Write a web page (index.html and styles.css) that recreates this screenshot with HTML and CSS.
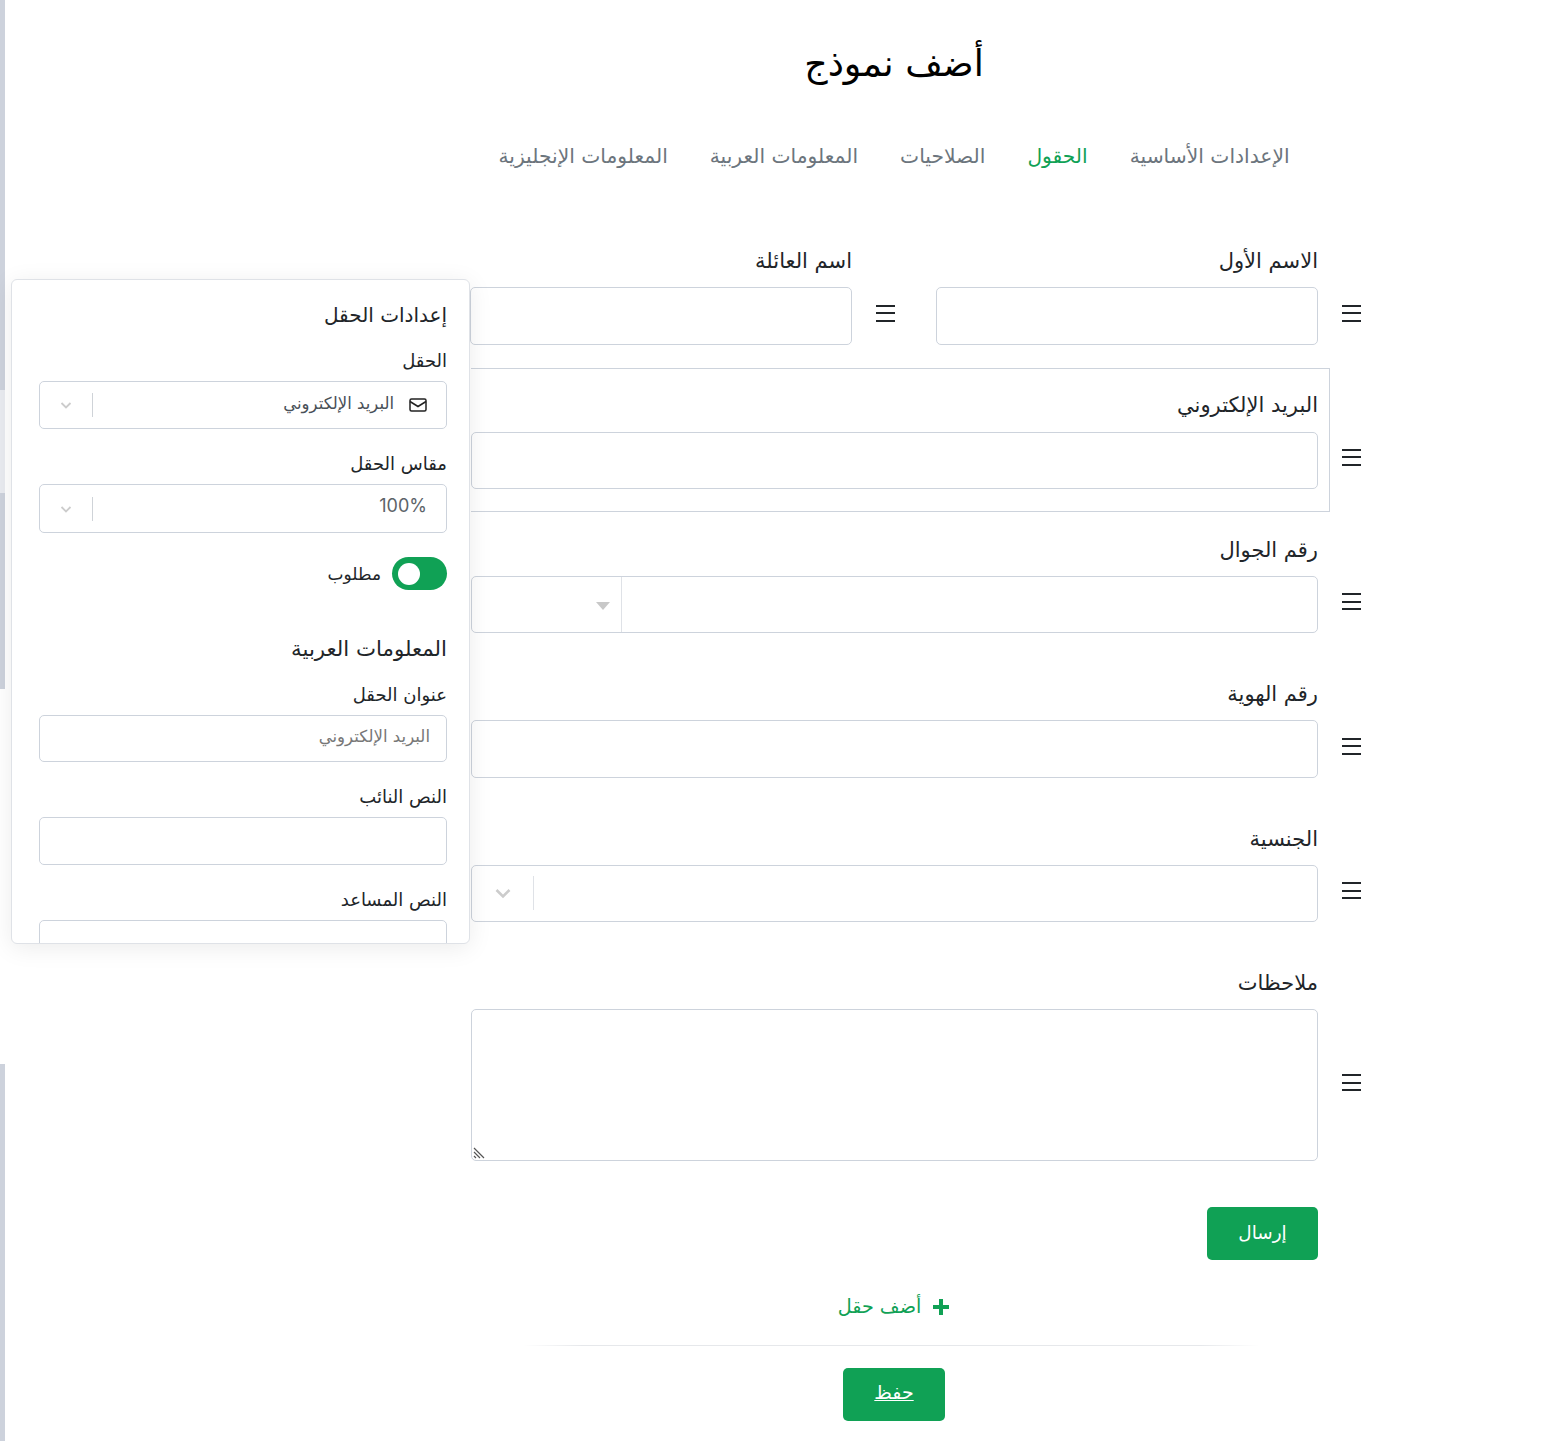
FILE: index.html
```html
<!DOCTYPE html>
<html lang="ar" dir="rtl">
<head>
    <meta charset="UTF-8">
    <title>أضف نموذج</title>
    <link rel="stylesheet" href="styles.css">
</head>
<body>
    <!-- Left edge of the sidebar, mostly cut off -->
    <div class="edge">
        <div class="edge-a"></div>
        <div class="edge-b"></div>
        <div class="edge-c"></div>
        <div class="edge-d"></div>
        <div class="edge-e"></div>
    </div>

    <main class="page">
        <h1 class="title">أضف نموذج</h1>

        <nav class="tabs">
            <a>الإعدادات الأساسية</a>
            <a class="active">الحقول</a>
            <a>الصلاحيات</a>
            <a>المعلومات العربية</a>
            <a>المعلومات الإنجليزية</a>
        </nav>

        <div class="rows">
            <div class="row row-names">
                <div class="cell">
                    <span class="handle"><i></i><i></i><i></i></span>
                    <div class="field">
                        <label>الاسم الأول</label>
                        <div class="box"></div>
                    </div>
                </div>
                <div class="cell">
                    <span class="handle"><i></i><i></i><i></i></span>
                    <div class="field">
                        <label>اسم العائلة</label>
                        <div class="box"></div>
                    </div>
                </div>
            </div>

            <div class="row">
                <span class="handle"><i></i><i></i><i></i></span>
                <div class="field selected">
                    <label>البريد الإلكتروني</label>
                    <div class="box"></div>
                </div>
            </div>

            <div class="row">
                <span class="handle"><i></i><i></i><i></i></span>
                <div class="field">
                    <label>رقم الجوال</label>
                    <div class="box box-phone">
                        <div class="phone-code"><span class="caret"></span></div>
                    </div>
                </div>
            </div>

            <div class="row">
                <span class="handle"><i></i><i></i><i></i></span>
                <div class="field">
                    <label>رقم الهوية</label>
                    <div class="box"></div>
                </div>
            </div>

            <div class="row">
                <span class="handle"><i></i><i></i><i></i></span>
                <div class="field">
                    <label>الجنسية</label>
                    <div class="box box-select">
                        <span class="sep"></span>
                        <svg class="chevron" width="20" height="20" viewBox="0 0 20 20"><path d="M3.5 7 10 13.5 16.5 7" fill="none" stroke="#ccc" stroke-width="2.6"/></svg>
                    </div>
                </div>
            </div>

            <div class="row row-notes">
                <span class="handle handle-notes"><i></i><i></i><i></i></span>
                <div class="field">
                    <label>ملاحظات</label>
                    <div class="box box-area">
                        <svg class="grip" width="12" height="12" viewBox="0 0 12 12"><path d="M1 1 11 11M1 5l6 6M1 9l2 2" stroke="#555" stroke-width="1.2" fill="none"/></svg>
                    </div>
                </div>
            </div>

            <div class="send-row">
                <button class="btn btn-send">إرسال</button>
            </div>
        </div>

        <div class="add-field">
            <svg width="18" height="18" viewBox="0 0 18 18"><path d="M9 1v16M1 9h16" stroke="#10a155" stroke-width="4"/></svg>
            <span>أضف حقل</span>
        </div>

        <hr class="divider">

        <div class="save-row">
            <button class="btn btn-save">حفظ</button>
        </div>
    </main>

    <!-- Floating field settings panel -->
    <aside class="panel">
        <h2>إعدادات الحقل</h2>

        <label class="panel-label">الحقل</label>
        <div class="pick pick-first">
            <svg class="mail" width="18" height="14" viewBox="0 0 18 14"><rect x="1" y="1" width="16" height="12" rx="1.5" fill="none" stroke="#222" stroke-width="1.5"/><path d="M1 3.5 9 8.5l8-5" fill="none" stroke="#222" stroke-width="1.5"/></svg>
            <span class="pick-text">البريد الإلكتروني</span>
            <span class="pick-sep"></span>
            <svg class="pick-chev" width="14" height="14" viewBox="0 0 14 14"><path d="M2.5 5 7 9.5 11.5 5" fill="none" stroke="#ccc" stroke-width="1.8"/></svg>
        </div>

        <label class="panel-label">مقاس الحقل</label>
        <div class="pick">
            <span class="pick-value">100%</span>
            <span class="pick-sep"></span>
            <svg class="pick-chev" width="14" height="14" viewBox="0 0 14 14"><path d="M2.5 5 7 9.5 11.5 5" fill="none" stroke="#ccc" stroke-width="1.8"/></svg>
        </div>

        <div class="toggle-row">
            <span class="toggle"><span class="knob"></span></span>
            <span>مطلوب</span>
        </div>

        <h2 class="panel-sub">المعلومات العربية</h2>

        <label class="panel-label">عنوان الحقل</label>
        <div class="plain plain-hint">البريد الإلكتروني</div>

        <label class="panel-label">النص النائب</label>
        <div class="plain"></div>

        <label class="panel-label">النص المساعد</label>
        <div class="plain"></div>
    </aside>
</body>
</html>
```

FILE: styles.css
```css
* {
    box-sizing: border-box;
}

html, body {
    margin: 0;
    height: 1441px;
    overflow: hidden;
}

body {
    background: #fff;
    color: #212529;
    font-family: "DejaVu Sans", sans-serif;
    font-size: 16px;
    position: relative;
}

/* Sidebar edge */
.edge {
    position: absolute;
    left: 0;
    top: 0;
    width: 5px;
    height: 1441px;
    display: flex;
    flex-direction: column;
}

.edge-a { height: 390px; background: #cdd2dc; }
.edge-b { height: 103px; background: #e9ebf0; }
.edge-c { height: 196px; background: #cdd2dc; }
.edge-d { height: 375px; background: #fff; }
.edge-e { flex: 1; background: #cdd2dc; }

/* Main column */
.page {
    width: 1557px;
    padding: 0 196px 0 0;
}

.title {
    margin: 0 44px 0 471px;
    padding-top: 37px;
    height: 123px;
    text-align: center;
    font-size: 36.3px;
    font-weight: 400;
    line-height: 54px;
    color: #000;
}

.tabs {
    display: flex;
    justify-content: center;
    gap: 42px;
    height: 124px;
    padding-top: 18px;
    margin: 0 44px 0 471px;
    font-size: 20.26px;
    line-height: 30px;
    color: #6c757d;
}

.tabs .active {
    color: #10a155;
}

.rows {
    display: flex;
    flex-direction: column;
    margin-left: 471px;
}

.row {
    display: flex;
    align-items: flex-start;
    gap: 24px;
    height: 144.4px;
    flex: none;
}

.row-names {
    gap: 41px;
    margin-left: -1px;
}

.row-notes {
    height: 238px;
}

.cell {
    display: flex;
    align-items: flex-start;
    gap: 24px;
    width: 425px;
    flex: none;
}

.field {
    flex: 1;
    min-width: 0;
}

.field label {
    display: block;
    font-size: 21px;
    line-height: 28px;
    margin-bottom: 12px;
}

.selected {
    height: 144px;
    border: 1px solid #cdd3dc;
    border-left: 0;
    margin: -23px -12px 0 0;
    padding: 22px 11px 0 0;
}

.selected label {
    margin-bottom: 13px;
}

.selected .box {
    height: 57px;
}

.box {
    height: 57.5px;
    border: 1px solid #cdd3dc;
    border-radius: 5px;
    background: #fff;
}

.box-phone {
    display: flex;
}

.phone-code {
    width: 150px;
    margin-right: auto;
    border-right: 1px solid #dfe2e7;
    position: relative;
}

.caret {
    position: absolute;
    left: 124px;
    top: 25px;
    border-left: 7px solid transparent;
    border-right: 7px solid transparent;
    border-top: 8px solid #c8c8c8;
}

.box-select {
    display: flex;
    align-items: center;
    justify-content: flex-end;
}

.sep {
    width: 1px;
    height: 34px;
    background: #dfe2e7;
    margin-left: 20px;
}

.chevron {
    margin-left: 21px;
}

.box-area {
    height: 152px;
    position: relative;
}

.grip {
    position: absolute;
    left: 1px;
    bottom: 1px;
}

.handle {
    width: 19px;
    flex: none;
    display: flex;
    flex-direction: column;
    gap: 5.5px;
    margin-top: 57.5px;
}

.handle-notes {
    margin-top: 105.5px;
}

.handle i {
    display: block;
    height: 2px;
    background: #212529;
}

.send-row {
    margin-right: 43px;
}

.btn {
    border: 0;
    border-radius: 5px;
    background: #10a155;
    color: #fff;
    font-family: inherit;
    display: block;
}

.btn-send {
    width: 111px;
    height: 53px;
    font-size: 18.4px;
    padding-bottom: 3px;
}

.add-field {
    display: flex;
    justify-content: center;
    align-items: center;
    gap: 11px;
    margin: 35px 44px 0 471px;
    height: 24px;
    color: #10a155;
    font-size: 19.2px;
}

.divider {
    width: 736px;
    height: 1px;
    border: 0;
    margin: 26px 102px 22px auto;
    background: linear-gradient(to right, transparent, #e6e8eb 8%, #e6e8eb 92%, transparent);
}

.save-row {
    display: flex;
    justify-content: center;
    margin: 0 44px 0 471px;
}

.btn-save {
    width: 102px;
    height: 53px;
    font-size: 19px;
    text-decoration: underline;
    padding-bottom: 5px;
}

/* Settings panel */
.panel {
    position: absolute;
    left: 11px;
    top: 279px;
    width: 459px;
    height: 665px;
    background: #fff;
    border: 1px solid #dfe2e7;
    border-radius: 6px;
    box-shadow: 0 4px 24px rgba(0, 0, 0, 0.08);
    padding: 20px 22px 0 27px;
    overflow: hidden;
}

.panel h2 {
    margin: 0 0 17px;
    font-size: 20px;
    font-weight: 400;
    line-height: 30px;
}

.panel h2.panel-sub {
    margin: 43px 0 17px;
    font-size: 21.3px;
    line-height: 31px;
}

.panel-label {
    display: block;
    font-size: 18px;
    line-height: 27px;
    margin-bottom: 7px;
}

.pick {
    height: 49px;
    border: 1px solid #cdd3dc;
    border-radius: 5px;
    display: flex;
    align-items: center;
    padding-right: 19px;
    margin-bottom: 21px;
}

.pick-first {
    height: 48px;
}

.mail {
    margin-left: 15px;
}

.pick-text {
    font-size: 16.5px;
    color: #495057;
    margin-bottom: 4px;
}

.pick-value {
    font-family: Inter, sans-serif;
    font-size: 18px;
    color: #5c6369;
    direction: ltr;
    margin-bottom: 6px;
}

.pick-sep {
    width: 1px;
    height: 24px;
    background: #cfd3d8;
    margin-right: auto;
}

.pick-chev {
    margin: 0 19px 0 19px;
}

.toggle-row {
    display: flex;
    align-items: center;
    gap: 11px;
    height: 33px;
    margin-top: 24px;
    font-size: 17px;
}

.toggle {
    width: 55px;
    height: 33px;
    background: #10a155;
    border-radius: 17px;
    position: relative;
}

.knob {
    position: absolute;
    left: 6px;
    top: 5.5px;
    width: 22px;
    height: 22px;
    background: #fff;
    border-radius: 50%;
}

.plain {
    height: 48px;
    border: 1px solid #cdd3dc;
    border-radius: 5px;
    margin-bottom: 21px;
    padding: 0 16px;
    line-height: 41px;
    font-size: 16.6px;
    color: #777;
}

.plain-hint {
    height: 47px;
}
```
